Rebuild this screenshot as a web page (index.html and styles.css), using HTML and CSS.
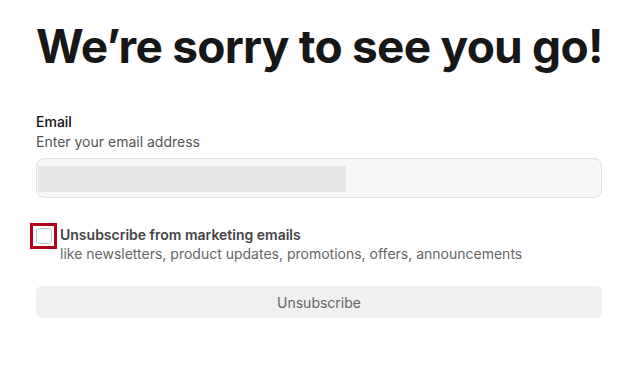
FILE: index.html
```html
<!DOCTYPE html>
<html lang="en">
<head>
<meta charset="utf-8">
<link rel="stylesheet" href="styles.css">
</head>
<body>
<main class="page">
  <h1 class="title">We’re sorry to see you go!</h1>
  <form class="form">
    <div class="field">
      <label class="label">Email</label>
      <div class="hint">Enter your email address</div>
      <div class="input"><span class="input-fill"></span></div>
    </div>
    <div class="check-row">
      <span class="check-focus"><span class="check-box"></span></span>
      <div class="check-text">
        <div class="check-label">Unsubscribe from marketing emails</div>
        <div class="check-desc">like newsletters, product updates, promotions, offers, announcements</div>
      </div>
    </div>
    <button type="button" class="btn">Unsubscribe</button>
  </form>
</main>
</body>
</html>
```
FILE: styles.css
```css
* { box-sizing: border-box; }
html, body { margin: 0; background: #fff; }
body { font-family: Inter, "Noto Sans", sans-serif; color: #111; }
.page { padding: 18px 18px 0 36px; }
.title {
  margin: 0;
  font-size: 46px;
  line-height: 56px;
  font-weight: 700;
  letter-spacing: -0.75px;
  white-space: nowrap;
  color: #171717;
}
.form { margin-top: 38px; display: flex; flex-direction: column; }
.field { display: flex; flex-direction: column; }
.label { font-size: 14px; line-height: 20px; font-weight: 500; color: #111; }
.hint { font-size: 14px; line-height: 20px; color: #555; }
.input {
  margin-top: 6px;
  height: 40px;
  background: #f7f7f7;
  border: 1px solid #e2e2e2;
  border-radius: 8px;
  padding: 7px 1px;
}
.input-fill { display: block; width: 308px; height: 26px; background: #e6e6e6; }
.check-row { display: flex; align-items: flex-start; margin-top: 25px; margin-left: -6px; gap: 3px; }
.check-focus {
  width: 27px; height: 26px;
  border: 3px solid #b0001e;
  display: flex; align-items: center; justify-content: center;
  flex: none;
}
.check-box {
  width: 16px; height: 16px;
  border: 1px solid #c8c8c8;
  border-radius: 3px;
  background: #fff;
}
.check-text { padding-top: 2px; }
.check-label { font-size: 14px; line-height: 19px; font-weight: 600; color: #444; }
.check-desc { font-size: 14px; line-height: 20px; color: #666; }
.btn {
  margin-top: 22px;
  height: 32px;
  border: 0;
  border-radius: 6px;
  background: #f0f0f0;
  color: #666;
  font-family: Inter, "Noto Sans", sans-serif;
  font-size: 14px;
}
```
